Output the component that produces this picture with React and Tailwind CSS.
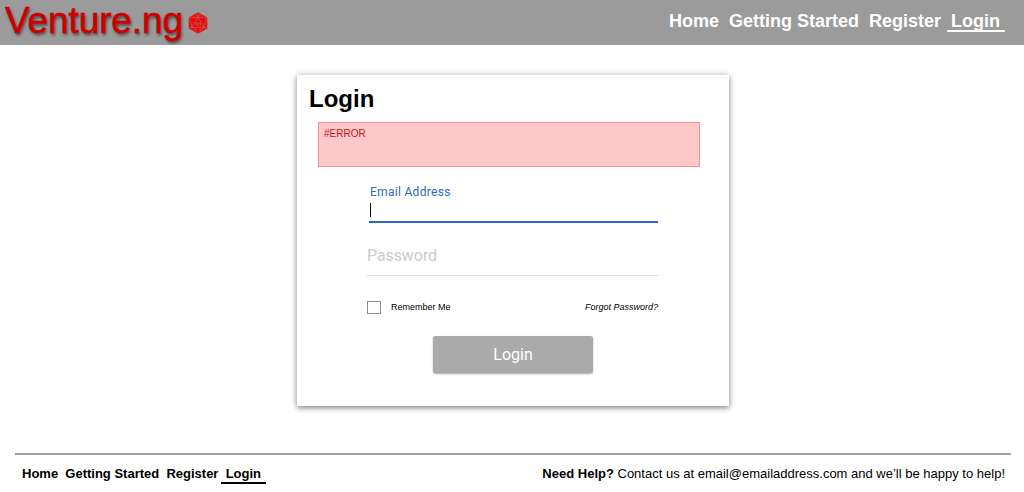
import React from "react";

function Die() {
  return (
    <svg width="20" height="22" viewBox="0 0 20 22" className="mt-[12px] shrink-0">
      <polygon points="10,0.3 19.3,5.5 19.3,16.4 10,21.7 0.7,16.4 0.7,5.5" fill="#e80c0c" />
      <g fill="none" stroke="#a87575" strokeWidth="0.55">
        <polygon points="10,5 16,15.3 4,15.3" />
        <path d="M10 .5V5M10 5L19 5.8L16 15.3L19 16.2M10 5L1 5.8L4 15.3L1 16.2M4 15.3L10 21.5L16 15.3" />
        <path d="M8 11h2v2H8zM11 11h1.5v2H11M7 3.3l2-.5M11 2.8l2 .5M7 17.5h2M11 17.5h2" />
      </g>
    </svg>
  );
}

const links = ["Home", "Getting Started", "Register"];

export default function App() {
  return (
    <div className="flex h-[492px] w-[1024px] flex-col overflow-hidden bg-white font-['Liberation_Sans',Arial,sans-serif] text-black">
      <header className="flex h-[45px] shrink-0 justify-between bg-[#9b9b9b]">
        <div className="flex pl-[5px]">
          <div className="h-[45px] w-[183px] whitespace-nowrap text-[37px] leading-[42px] tracking-[-0.1px] text-[#cc0000] [-webkit-text-stroke:0.6px_#cc0000] [text-shadow:1px_2px_3px_rgba(0,0,0,0.6)]">
            Venture.ng
          </div>
          <Die />
        </div>
        <nav className="flex gap-[10px] pt-[10px] pr-[24px] text-[18px] font-bold leading-[22px] text-white">
          {links.map((l) => (
            <a key={l}>{l}</a>
          ))}
          <a className="-mr-[5px] -ml-[4px] h-[22px] border-b-2 border-white pr-[5px] pl-[4px]">Login</a>
        </nav>
      </header>

      <main className="mx-auto mt-[30px] ml-[297px] h-[331px] w-[432px] shrink-0 bg-white shadow-[0_2px_5px_rgba(0,0,0,0.4),0_0_8px_rgba(0,0,0,0.16)]">
        <h1 className="ml-[12px] pt-[10px] text-[24px] font-bold leading-[28px]">Login</h1>
        <div className="mt-[9px] ml-[21px] h-[45px] w-[382px] border border-[#fa9191] bg-[#fcc8c8] pt-[5px] pl-[5px] text-[10px] leading-[12px] text-[#c5161d]">
          #ERROR
        </div>
        <form className="ml-[70px] w-[291px]">
          <div className="mt-[17px] ml-[2px] h-[39px] border-b-2 border-[#2b69c0]">
            <label className="block pl-px font-['Roboto',sans-serif] text-[12px] leading-[16px] tracking-[0.3px] text-[#2b69c0]">Email Address</label>
            <div className="mt-[3px] ml-px h-[14px] w-px bg-black" />
          </div>
          <div className="mt-[22px] h-[31px] border-b border-[#dcdcdc] font-['Roboto',sans-serif] text-[16px] leading-[21px] tracking-[-0.1px] text-[#cbcbcb]">Password</div>
          <div className="mt-[25px] flex h-[13px] items-start text-[9px] leading-[12px]">
            <span className="h-[13px] w-[14px] border border-[#8f8f8f]" />
            <span className="ml-[10px]">Remember Me</span>
            <a className="ml-auto italic">Forgot Password?</a>
          </div>
          <button type="button" className="mt-[22px] ml-[66px] flex h-[37px] w-[160px] items-center justify-center rounded-[3px] bg-[#aaaaaa] font-['Roboto',sans-serif] text-[16px] text-white shadow-[0_1px_2px_rgba(0,0,0,0.35)]">
            Login
          </button>
        </form>
      </main>

      <footer className="mx-[15px] mt-[47px] mr-[13px] flex justify-between border-t-2 border-[#a0a0a0] pt-[11px] pr-[6px] pl-[7px] text-[13px] leading-[16px]">
        <nav className="flex gap-[7.2px] font-bold">
          {links.map((l) => (
            <a key={l}>{l}</a>
          ))}
          <a className="-mx-[5px] h-[18px] border-b-2 border-black px-[5px]">Login</a>
        </nav>
        <p>
          <b>Need Help?</b> Contact us at email@emailaddress.com and we’ll be happy to help!
        </p>
      </footer>
    </div>
  );
}
